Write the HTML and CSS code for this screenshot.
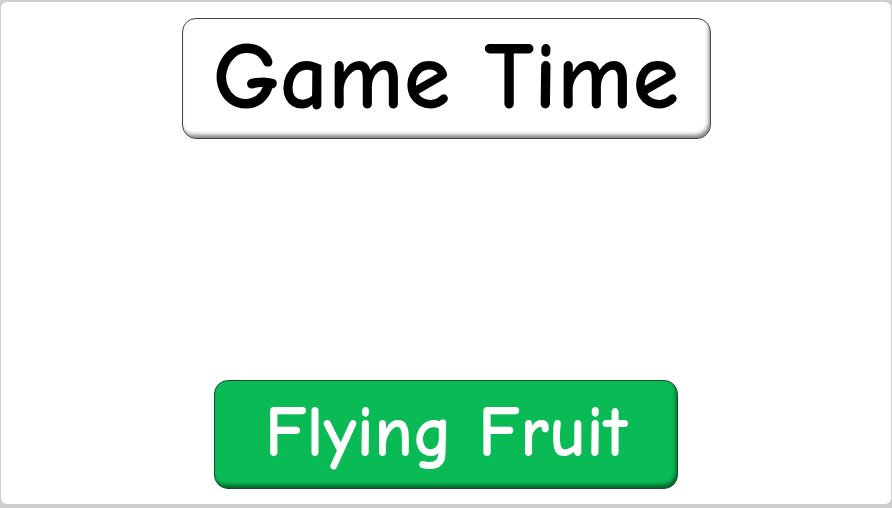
FILE: index.html
```html
<!DOCTYPE html>
<html lang="en">
<head>
    <meta charset="UTF-8">
    <meta name="viewport" content="width=device-width, initial-scale=1.0">
    <title>Game Time</title>
    <link rel="stylesheet" href="styles.css">
</head>
<body>
    <div class="stage">
        <div class="title">Game Time</div>
        <a href="javascript:;" class="playBtn">Flying Fruit</a>
    </div>
</body>
</html>
```

FILE: styles.css
```css
*{
    margin: 0;
    padding: 0;
    box-sizing: border-box;
}
html, body{
    height: 100%;
}
body{
    background: #cfcfcf;
    padding: 2px 1px 4px 1px;
    font-family: "Comic Sans MS", "Comic Neue", "DejaVu Sans", sans-serif;
}
.stage{
    height: 100%;
    background: #fff;
    border-radius: 6px;
    display: flex;
    flex-direction: column;
    align-items: center;
    justify-content: space-between;
    padding: 16px 0 15px 0;
}
.title{
    width: 529px;
    height: 121px;
    border: 1px solid #444;
    border-radius: 14px;
    background: #fff;
    box-shadow: inset -2px -4px 4px -1px rgba(0,0,0,.5);
    display: flex;
    align-items: center;
    justify-content: center;
    font-size: 95px;
    font-weight: bold;
    color: #000;
    padding-bottom: 3px;
}
.playBtn{
    width: 464px;
    height: 109px;
    border: 1px solid #1b4a2c;
    border-radius: 14px;
    background: #0abb55;
    box-shadow: inset -2px -4px 4px -1px rgba(0,0,0,.5);
    display: flex;
    align-items: center;
    justify-content: center;
    text-decoration: none;
    color: #fff;
    font-size: 72px;
    font-weight: bold;
    padding-bottom: 4px;
}
```
